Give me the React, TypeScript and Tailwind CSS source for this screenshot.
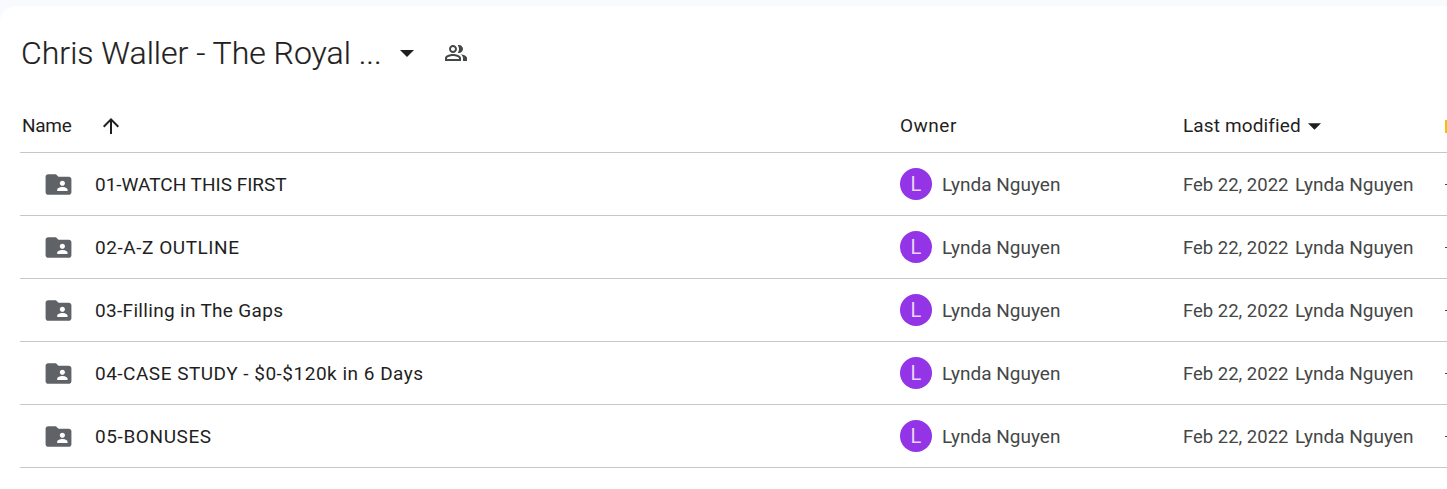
const files = [
  { name: '01-WATCH THIS FIRST', tracking: 'tracking-normal' },
  { name: '02-A-Z OUTLINE', tracking: 'tracking-[0.55px]' },
  { name: '03-Filling in The Gaps', tracking: 'tracking-[0.32px]' },
  { name: '04-CASE STUDY - $0-$120k in 6 Days', tracking: 'tracking-[0.5px]' },
  { name: '05-BONUSES', tracking: 'tracking-[0.6px]' },
];

function SharedFolderIcon() {
  return (
    <svg width="31" height="31" viewBox="0 0 24 24" className="shrink-0 text-[#5f6368]">
      <path
        fill="currentColor"
        d="M20 6h-8l-2-2H4c-1.1 0-2 .9-2 2v12c0 1.1.9 2 2 2h16c1.1 0 2-.9 2-2V8c0-1.1-.9-2-2-2zm-5 3c1.1 0 2 .9 2 2s-.9 2-2 2-2-.9-2-2 .9-2 2-2zm4 8h-8v-1c0-1.33 2.67-2 4-2s4 .67 4 2v1z"
      />
    </svg>
  );
}

function CaretDown({ className }: { className: string }) {
  return (
    <svg viewBox="0 0 14 7" className={className}>
      <path fill="currentColor" d="M0 0h14L7 7z" />
    </svg>
  );
}

export default function App() {
  return (
    <div className="h-[489px] w-[1447px] overflow-hidden bg-[#f8fafd] pt-[6px] font-['Roboto',sans-serif]">
      <div className="h-full rounded-tl-2xl bg-white pl-5">
        {/* Title */}
        <div className="flex h-[94px] items-center pl-px">
          <h1 className="text-[32px] font-light leading-10 text-[#1f1f1f] [-webkit-text-stroke:0.2px_#1f1f1f]">Chris Waller - The Royal ...</h1>
          <CaretDown className="ml-[18px] h-[7px] w-[14px] text-[#1f1f1f]" />
          <svg width="24" height="24" viewBox="0 0 24 24" className="ml-[30px] text-[#444746]">
            <path
              fill="currentColor"
              d="M16.67 13.13C18.04 14.06 19 15.32 19 17v3h4v-3c0-2.18-3.57-3.47-6.33-3.87zM15 12c2.21 0 4-1.79 4-4s-1.79-4-4-4c-.47 0-.91.1-1.33.24C14.5 5.27 15 6.58 15 8s-.5 2.73-1.33 3.76c.42.14.86.24 1.33.24zM9 12c2.21 0 4-1.79 4-4s-1.79-4-4-4-4 1.79-4 4 1.79 4 4 4zm0-6c1.1 0 2 .9 2 2s-.9 2-2 2-2-.9-2-2 .9-2 2-2zm0 7c-2.67 0-8 1.34-8 4v3h16v-3c0-2.66-5.33-4-8-4zm6 5H3v-.99C3.2 16.29 6.3 15 9 15s5.8 1.29 6 2v1z"
            />
          </svg>
        </div>

        {/* Column headers */}
        <div className="flex h-[53px] items-center border-b border-[#c7c7c7] text-[19px] text-[#1f1f1f]">
          <div className="flex w-[880px] items-center pl-[2px]">
            <span className="w-[49px] tracking-[-0.3px]">Name</span>
            <svg width="24" height="24" viewBox="0 0 24 24" className="ml-[28px] text-[#1f1f1f]">
              <path fill="currentColor" d="M4 12l1.41 1.41L11 7.83V20h2V7.83l5.58 5.59L20 12l-8-8-8 8z" />
            </svg>
          </div>
          <div className="w-[282px] tracking-[0.5px]">Owner</div>
          <div className="flex items-center pl-px">
            <span className="tracking-[0.12px]">Last modified</span>
            <CaretDown className="ml-[7px] h-[7px] w-[13px] text-[#1f1f1f]" />
          </div>
          <div className="ml-auto h-[13px] w-[2px] bg-[#f2c200]" />
        </div>

        {/* Rows */}
        {files.map((file) => (
          <div key={file.name} className="flex h-[63px] items-center border-b border-[#c7c7c7] text-[19px] leading-[26px]">
            <div className="flex w-[880px] items-center pl-[23px]">
              <SharedFolderIcon />
              <span className={`ml-[21px] pt-[2px] text-[#1f1f1f] ${file.tracking}`}>{file.name}</span>
            </div>
            <div className="flex w-[282px] items-center text-[#444746]">
              <div className="flex h-8 w-8 items-center justify-center rounded-full bg-[#9334e6] text-xl text-[#e9d5ff]">L</div>
              <span className="ml-[10px] pt-[2px]">Lynda Nguyen</span>
            </div>
            <span className="w-[113px] whitespace-nowrap pt-[2px] pl-px text-[18.5px] text-[#444746]">Feb 22, 2022</span>
            <span className="pt-[2px] text-[#444746]">Lynda Nguyen</span>
            <span className="ml-auto h-px w-[2px] bg-[#444746]" />
          </div>
        ))}
      </div>
    </div>
  );
}
